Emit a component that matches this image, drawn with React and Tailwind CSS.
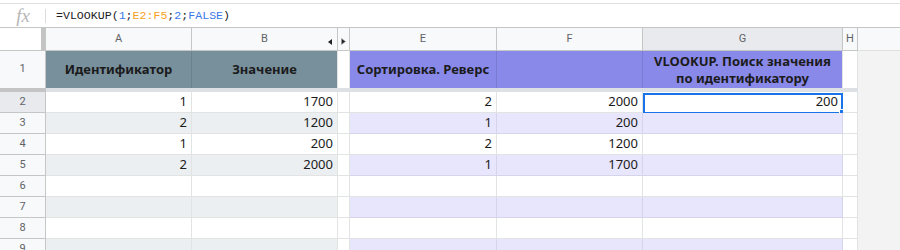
const COLS = [
  { key: 'A', w: 'w-[146px]', group: 'slate' },
  { key: 'B', w: 'w-[146px]', group: 'slate' },
  { key: 'D', w: 'w-[12px]', group: 'none' },
  { key: 'E', w: 'w-[147px]', group: 'violet' },
  { key: 'F', w: 'w-[146px]', group: 'violet' },
  { key: 'G', w: 'w-[200px]', group: 'violet' },
  { key: 'H', w: 'w-[15px]', group: 'none' },
]

const DATA = [
  { n: 2, A: '1', B: '1700', E: '2', F: '2000', G: '200' },
  { n: 3, A: '2', B: '1200', E: '1', F: '200' },
  { n: 4, A: '1', B: '200', E: '2', F: '1200' },
  { n: 5, A: '2', B: '2000', E: '1', F: '1700' },
  { n: 6 },
  { n: 7 },
  { n: 8 },
  { n: 9 },
]

function ArrowLeft() {
  return (
    <svg viewBox="0 0 4 6" width="4" height="6" className="absolute right-[5px] top-[11px]">
      <path d="M4 0L0 3l4 3z" fill="#202124" />
    </svg>
  )
}

function ArrowRight() {
  return (
    <svg viewBox="0 0 5 7" width="5" height="7" className="absolute left-[3px] top-[10px]">
      <path d="M0.5 0.5L4.5 3.5L0.5 6.5z" fill="#202124" stroke="#9aa0a6" strokeWidth="0.6" />
    </svg>
  )
}

function FormulaBar() {
  return (
    <div className="h-[27px] pt-[3px]">
      <div className="h-[24px] border-t border-[#e0e0e0] flex items-center">
        <div className="w-[45px] flex items-center justify-center">
          <span className="font-['Liberation_Serif'] italic text-[19px] leading-none text-[#b7b7b7] pl-[1px]">fx</span>
        </div>
        <div className="w-px h-[14px] bg-[#dadce0]" />
        <div className="pl-[10px] font-['Liberation_Mono'] text-[11.6px] text-[#202124] leading-none">
          =VLOOKUP(<span className="text-[#3b78e7]">1</span>;<span className="text-[#f5a11c]">E2:F5</span>;<span className="text-[#3b78e7]">2</span>;<span className="text-[#3b78e7]">FALSE</span>)
        </div>
      </div>
    </div>
  )
}

function ColumnHeader() {
  return (
    <div className="flex h-[24px] border-t border-[#c4c7c5]">
      <div className="flex w-[46px] border-r border-b border-[#c4c7c5] bg-white">
        <div className="w-[41px]" />
        <div className="w-[4px] bg-[#c4c4c4]" />
      </div>
      {COLS.map((c) => (
        <div
          key={c.key}
          className={`${c.w} relative flex items-center justify-center border-r border-b border-[#c4c7c5] text-[11px] text-[#5f6368] font-['Roboto'] ${c.key === 'G' ? 'bg-[#e8eaed]' : 'bg-[#f8f9fa]'}`}
        >
          {c.key !== 'D' && c.key}
          {c.key === 'B' && <ArrowLeft />}
          {c.key === 'D' && <ArrowRight />}
        </div>
      ))}
      <div className="flex-1 bg-[#f8f9fa] border-b border-[#e0e0e0]" />
    </div>
  )
}

function HeaderRow() {
  return (
    <div className="flex h-[37px]">
      <div className="w-[46px] flex items-center justify-center bg-[#f8f9fa] border-r border-[#c4c7c5] text-[11px] text-[#5f6368] font-['Roboto']">
        1
      </div>
      <div className="w-[146px] flex items-center justify-center bg-[#78909c] border-r border-[#6c828d] font-bold text-[13px] text-[#1b1b1b]">
        Идентификатор
      </div>
      <div className="w-[146px] flex items-center justify-center bg-[#78909c] border-r border-[#e2e3e3] font-bold text-[13px] text-[#1b1b1b]">
        Значение
      </div>
      <div className="w-[12px] bg-white border-r border-[#e2e3e3]" />
      <div className="w-[147px] flex items-center justify-center bg-[#8989e9] border-r border-[#7b7bd4] font-bold text-[13px] text-[#1b1b1b] whitespace-nowrap">
        Сортировка. Реверс
      </div>
      <div className="w-[146px] bg-[#8989e9] border-r border-[#7b7bd4]" />
      <div className="w-[200px] flex items-center justify-center text-center bg-[#8989e9] border-r border-[#e2e3e3] font-bold text-[13px] leading-[17px] text-[#1b1b1b]">
        VLOOKUP. Поиск значения
        <br />
        по идентификатору
      </div>
      <div className="w-[15px] bg-white border-r border-[#e2e3e3]" />
      <div className="flex-1 bg-[#f3f3f3]" />
    </div>
  )
}

function FreezeBar() {
  return (
    <div className="flex h-[4px]">
      <div className="w-[46px] bg-[#c4c4c4]" />
      <div className="w-[812px] bg-[#dde1e5]" />
      <div className="flex-1 bg-[#f3f3f3]" />
    </div>
  )
}

function DataRow({ row }) {
  const striped = row.n % 2 === 1
  const selected = row.n === 2
  const bg = (group) => {
    if (!striped) return 'bg-white'
    if (group === 'slate') return 'bg-[#ebeff1]'
    if (group === 'violet') return 'bg-[#e8e6fc]'
    return 'bg-white'
  }
  const line = (group) => (striped && group === 'violet' ? 'border-[#d6d4ea]' : 'border-[#e2e3e3]')
  return (
    <div className="flex h-[21px]">
      <div
        className={`w-[46px] flex items-center justify-center border-r border-b border-[#c4c7c5] text-[11px] text-[#5f6368] font-['Roboto'] ${selected ? 'bg-[#e8eaed]' : 'bg-[#f8f9fa]'}`}
      >
        {row.n}
      </div>
      {COLS.map((c) => (
        <div
          key={c.key}
          className={`${c.w} ${bg(c.group)} ${line(c.group)} relative flex items-center justify-end pr-[4px] border-r border-b text-[13px] text-[#1b1b1b]`}
        >
          {row[c.key]}
          {selected && c.key === 'G' && (
            <>
              <div className="absolute left-0 top-[1px] w-[200px] h-[21px] border-2 border-[#1a73e8]" />
              <div className="absolute right-[-4px] bottom-[-4px] w-[7px] h-[7px] bg-[#1a73e8] border border-white" />
            </>
          )}
        </div>
      ))}
      <div className="flex-1 bg-[#f3f3f3]" />
    </div>
  )
}

export default function App() {
  return (
    <div className="w-[900px] h-[250px] overflow-hidden bg-white font-['Noto_Sans',sans-serif]">
      <FormulaBar />
      <ColumnHeader />
      <HeaderRow />
      <FreezeBar />
      {DATA.map((row) => (
        <DataRow key={row.n} row={row} />
      ))}
    </div>
  )
}
